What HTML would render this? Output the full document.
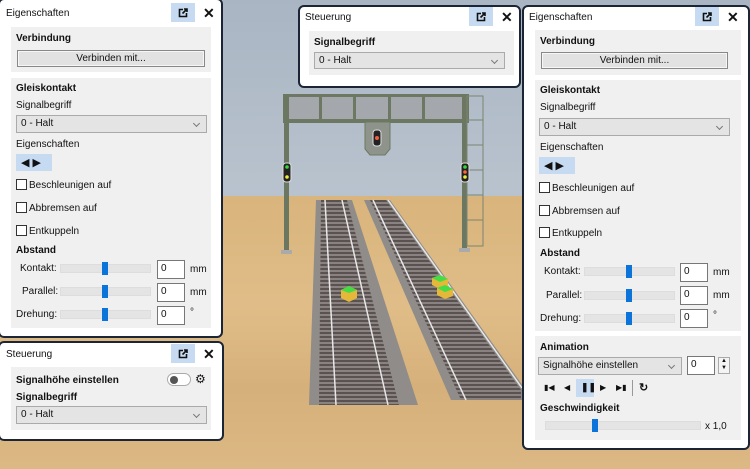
<!DOCTYPE html>
<html><head><meta charset="utf-8"><style>
*{box-sizing:border-box;margin:0;padding:0}
body{width:750px;height:469px;overflow:hidden;position:relative;font-family:"Liberation Sans",sans-serif;font-size:10px;color:#111;background:#d8b47e}
.a{position:absolute}
.p{position:absolute;background:#fff;border:2px solid #1b2535;border-radius:6px}
.s{position:absolute;background:#f0f0f0}
.t{position:absolute;font-size:10px;white-space:nowrap}
.b{font-weight:bold}
.pop{position:absolute;width:24px;height:19px;background:#c6dbf1}
.pop svg{position:absolute;left:7px;top:5px}
.x{position:absolute;font-size:14px;font-weight:bold}
.btn{position:absolute;border:1px solid #888;background:#e2e2e2;box-shadow:inset 0 0 0 1px #f6f6f6;text-align:center;font-size:10px;line-height:15px}
.sel{position:absolute;border:1px solid #aaa;background:#e4e4e4;font-size:10px;line-height:16px;padding-left:4px}
.sel:after{content:"";position:absolute;right:7px;top:5px;width:4px;height:4px;border-right:1px solid #777;border-bottom:1px solid #777;transform:rotate(45deg)}
.cb{position:absolute;width:11px;height:11px;border:1px solid #333;background:#fff}
.sl{position:absolute;height:9px;background:#e4e4e4;border:1px solid #ddd}
.th{position:absolute;width:6px;height:13px;background:#0a74da}
.in{position:absolute;width:28px;height:19px;border:1px solid #777;background:#fff;padding-left:3px;line-height:15px}
.ar{position:absolute;width:36px;height:17px;background:#c6dbf1}
</style></head><body>
<div class="a" style="left:0;top:0;width:750px;height:196px;background:linear-gradient(#a9b5c3,#b9c3ce)"></div>
<div class="a" style="left:0;top:196px;width:750px;height:273px;background:linear-gradient(180deg,#d9b47c,#e0bd88 40%,#d6b07a 70%,#dcb884)"></div>
<svg class="a" style="left:0;top:0" width="750" height="469">
<defs><pattern id="sl" width="10" height="4" patternUnits="userSpaceOnUse"><rect width="10" height="4" fill="#8a8280"/><rect width="10" height="2" fill="#5a5250"/></pattern></defs>
<rect x="283" y="94" width="186" height="29" fill="#6d7862"/>
<rect x="287" y="97" width="178" height="22" fill="#a4a8ac"/>
<g fill="#6d7862"><rect x="319" y="97" width="3" height="22"/><rect x="353" y="97" width="3" height="22"/><rect x="388" y="97" width="3" height="22"/><rect x="422" y="97" width="3" height="22"/></g>
<rect x="284" y="94" width="5" height="160" fill="#6b7760"/>
<rect x="462" y="94" width="5" height="158" fill="#6b7760"/>
<rect x="281" y="250" width="11" height="4" fill="#aaa"/><rect x="459" y="248" width="11" height="4" fill="#aaa"/>
<g stroke="#7a8470" fill="none"><rect x="467" y="96" width="16" height="150"/><line x1="467" y1="120" x2="483" y2="120"/><line x1="467" y1="145" x2="483" y2="145"/><line x1="467" y1="170" x2="483" y2="170"/><line x1="467" y1="195" x2="483" y2="195"/><line x1="467" y1="220" x2="483" y2="220"/></g>
<path d="M365 122h25v27l-5 6h-15l-5-6z" fill="#8e948c" stroke="#6d7862"/>
<rect x="373" y="130" width="8" height="16" rx="3" fill="#222" stroke="#ddd"/><circle cx="377" cy="138" r="2" fill="#f06040"/>
<rect x="283" y="163" width="8" height="19" rx="3" fill="#222" stroke="#ddd"/><circle cx="287" cy="167" r="1.8" fill="#3d3"/><circle cx="287" cy="177" r="1.8" fill="#ee3"/>
<rect x="461" y="163" width="8" height="19" rx="3" fill="#222" stroke="#ddd"/><circle cx="465" cy="167" r="1.8" fill="#3d3"/><circle cx="465" cy="172" r="1.8" fill="#f64"/><circle cx="465" cy="177" r="1.8" fill="#ee3"/>
<path d="M316 200h36l66 205h-109z" fill="#8f8c8a"/>
<path d="M321 200h26l52 205h-80z" fill="url(#sl)"/>
<line x1="325" y1="200" x2="336" y2="405" stroke="#e8e8e8" stroke-width="1.5"/><line x1="342" y1="200" x2="388" y2="405" stroke="#e8e8e8" stroke-width="1.5"/>
<path d="M364 200h26l133 186v14l-72 0z" fill="#8f8c8a"/>
<path d="M370 200h16l135 190v10h-60z" fill="url(#sl)"/>
<line x1="373" y1="200" x2="466" y2="400" stroke="#e8e8e8" stroke-width="1.5"/><line x1="388" y1="200" x2="522" y2="388" stroke="#e8e8e8" stroke-width="1.5"/>
<path d="M341 290l8-4 8 4v8l-8 4-8-4z" fill="#e5b83a"/><path d="M341 290l8-4 8 4-8 3z" fill="#4d4"/>
<path d="M432 278l8-3 8 4v7l-8 3-8-4z" fill="#e5b83a"/><path d="M432 278l8-3 8 4-8 3z" fill="#4d4"/>
<path d="M437 288l8-3 8 4v7l-8 3-8-4z" fill="#e5b83a"/><path d="M437 288l8-3 8 4-8 3z" fill="#4d4"/>
</svg>

<div class="p" style="left:-2px;top:-2px;width:225px;height:340px"></div>
<div class="t" style="left:6px;top:8px">Eigenschaften</div>
<div class="pop" style="left:171px;top:3px"><svg width="10" height="10" viewBox="0 0 10 10" fill="none" stroke="#111" stroke-width="1.6"><path d="M5 1.5H1.5v7h7V5"/><path d="M4.5 5.5L9 1M6 1h3v3"/></svg></div>
<div class="x" style="left:203px;top:5px">✕</div>
<div class="s" style="left:11px;top:27px;width:200px;height:45px"></div>
<div class="t b" style="left:16px;top:33px">Verbindung</div>
<div class="btn" style="left:17px;top:50px;width:188px;height:17px">Verbinden mit...</div>
<div class="s" style="left:11px;top:78px;width:200px;height:250px"></div>
<div class="t b" style="left:16px;top:83px">Gleiskontakt</div>
<div class="t" style="left:16px;top:100px">Signalbegriff</div>
<div class="sel" style="left:16px;top:115px;width:191px;height:18px">0 - Halt</div>
<div class="t" style="left:16px;top:139px">Eigenschaften</div>
<div class="ar" style="left:16px;top:154px"></div>
<div class="t" style="left:21px;top:156px;font-size:11px">◀ ▶</div>
<div class="cb" style="left:16px;top:179px"></div><div class="t" style="left:29px;top:180px">Beschleunigen auf</div>
<div class="cb" style="left:16px;top:202px"></div><div class="t" style="left:29px;top:203px">Abbremsen auf</div>
<div class="cb" style="left:16px;top:225px"></div><div class="t" style="left:29px;top:226px">Entkuppeln</div>
<div class="t b" style="left:16px;top:245px">Abstand</div>
<div class="t" style="left:20px;top:263px">Kontakt:</div><div class="sl" style="left:60px;top:264px;width:91px"></div><div class="th" style="left:102px;top:262px"></div><div class="in" style="left:157px;top:260px">0</div><div class="t" style="left:190px;top:264px">mm</div>
<div class="t" style="left:22px;top:286px">Parallel:</div><div class="sl" style="left:60px;top:287px;width:91px"></div><div class="th" style="left:102px;top:285px"></div><div class="in" style="left:157px;top:283px">0</div><div class="t" style="left:190px;top:287px">mm</div>
<div class="t" style="left:16px;top:309px">Drehung:</div><div class="sl" style="left:60px;top:310px;width:91px"></div><div class="th" style="left:102px;top:308px"></div><div class="in" style="left:157px;top:306px">0</div><div class="t" style="left:190px;top:307px">°</div>

<div class="p" style="left:-2px;top:341px;width:226px;height:100px"></div>
<div class="t" style="left:6px;top:349px">Steuerung</div>
<div class="pop" style="left:171px;top:344px"><svg width="10" height="10" viewBox="0 0 10 10" fill="none" stroke="#111" stroke-width="1.6"><path d="M5 1.5H1.5v7h7V5"/><path d="M4.5 5.5L9 1M6 1h3v3"/></svg></div>
<div class="x" style="left:203px;top:346px">✕</div>
<div class="s" style="left:11px;top:367px;width:200px;height:63px"></div>
<div class="t b" style="left:16px;top:375px">Signalhöhe einstellen</div>
<div class="a" style="left:167px;top:373px;width:24px;height:13px;border:1px solid #aaa;border-radius:7px;background:#fff"></div>
<div class="a" style="left:170px;top:376px;width:8px;height:8px;border-radius:50%;background:#555"></div>
<div class="t" style="left:195px;top:372px;font-size:12px">⚙</div>
<div class="t b" style="left:16px;top:392px">Signalbegriff</div>
<div class="sel" style="left:16px;top:406px;width:191px;height:18px">0 - Halt</div>

<div class="p" style="left:298px;top:5px;width:223px;height:83px"></div>
<div class="t" style="left:305px;top:12px">Steuerung</div>
<div class="pop" style="left:469px;top:7px"><svg width="10" height="10" viewBox="0 0 10 10" fill="none" stroke="#111" stroke-width="1.6"><path d="M5 1.5H1.5v7h7V5"/><path d="M4.5 5.5L9 1M6 1h3v3"/></svg></div>
<div class="x" style="left:501px;top:9px">✕</div>
<div class="s" style="left:309px;top:31px;width:205px;height:44px"></div>
<div class="t b" style="left:314px;top:37px">Signalbegriff</div>
<div class="sel" style="left:314px;top:52px;width:191px;height:17px">0 - Halt</div>

<div class="p" style="left:522px;top:5px;width:228px;height:445px"></div>
<div class="t" style="left:529px;top:12px">Eigenschaften</div>
<div class="pop" style="left:695px;top:7px"><svg width="10" height="10" viewBox="0 0 10 10" fill="none" stroke="#111" stroke-width="1.6"><path d="M5 1.5H1.5v7h7V5"/><path d="M4.5 5.5L9 1M6 1h3v3"/></svg></div>
<div class="x" style="left:727px;top:9px">✕</div>
<div class="s" style="left:535px;top:30px;width:206px;height:45px"></div>
<div class="t b" style="left:540px;top:36px">Verbindung</div>
<div class="btn" style="left:541px;top:52px;width:187px;height:17px">Verbinden mit...</div>
<div class="s" style="left:535px;top:80px;width:206px;height:251px"></div>
<div class="t b" style="left:540px;top:85px">Gleiskontakt</div>
<div class="t" style="left:540px;top:102px">Signalbegriff</div>
<div class="sel" style="left:539px;top:118px;width:191px;height:18px">0 - Halt</div>
<div class="t" style="left:540px;top:142px">Eigenschaften</div>
<div class="ar" style="left:539px;top:157px"></div>
<div class="t" style="left:544px;top:159px;font-size:11px">◀ ▶</div>
<div class="cb" style="left:539px;top:182px"></div><div class="t" style="left:552px;top:183px">Beschleunigen auf</div>
<div class="cb" style="left:539px;top:205px"></div><div class="t" style="left:552px;top:206px">Abbremsen auf</div>
<div class="cb" style="left:539px;top:227px"></div><div class="t" style="left:552px;top:228px">Entkuppeln</div>
<div class="t b" style="left:540px;top:248px">Abstand</div>
<div class="t" style="left:544px;top:266px">Kontakt:</div><div class="sl" style="left:584px;top:267px;width:91px"></div><div class="th" style="left:626px;top:265px"></div><div class="in" style="left:680px;top:263px">0</div><div class="t" style="left:713px;top:267px">mm</div>
<div class="t" style="left:546px;top:290px">Parallel:</div><div class="sl" style="left:584px;top:291px;width:91px"></div><div class="th" style="left:626px;top:289px"></div><div class="in" style="left:680px;top:286px">0</div><div class="t" style="left:713px;top:290px">mm</div>
<div class="t" style="left:540px;top:313px">Drehung:</div><div class="sl" style="left:584px;top:314px;width:91px"></div><div class="th" style="left:626px;top:312px"></div><div class="in" style="left:680px;top:309px">0</div><div class="t" style="left:713px;top:310px">°</div>
<div class="s" style="left:535px;top:336px;width:206px;height:104px"></div>
<div class="t b" style="left:540px;top:342px">Animation</div>
<div class="sel" style="left:538px;top:357px;width:144px;height:18px">Signalhöhe einstellen</div>
<div class="in" style="left:687px;top:356px;width:28px">0</div>
<div class="a" style="left:718px;top:357px;width:12px;height:17px;border:1px solid #aaa;background:#f4f4f4;font-size:6px;line-height:7px;text-align:center">▲<br>▼</div>
<div class="a" style="left:576px;top:379px;width:18px;height:18px;background:#c6dbf1"></div>
<div class="t" style="left:544px;top:383px;font-size:8px">▮◀</div>
<div class="t" style="left:564px;top:383px;font-size:8px">◀</div>
<div class="t" style="left:581px;top:382px;font-size:9px;font-weight:bold">❚❚</div>
<div class="t" style="left:600px;top:383px;font-size:8px">▶</div>
<div class="t" style="left:616px;top:383px;font-size:8px">▶▮</div>
<div class="a" style="left:632px;top:380px;width:1px;height:16px;background:#999"></div>
<div class="t b" style="left:639px;top:381px;font-size:11px">↻</div>
<div class="t b" style="left:540px;top:403px">Geschwindigkeit</div>
<div class="sl" style="left:545px;top:421px;width:156px"></div>
<div class="th" style="left:592px;top:419px"></div>
<div class="t" style="left:705px;top:421px">x 1,0</div>
</body></html>
